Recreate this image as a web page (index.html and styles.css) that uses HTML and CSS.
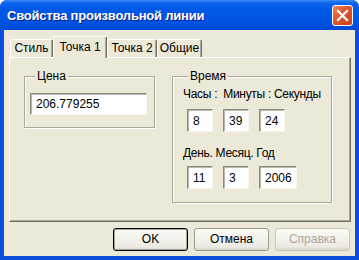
FILE: index.html
```html
<!DOCTYPE html>
<html lang="ru">
<head>
    <meta charset="UTF-8">
    <title>Свойства произвольной линии</title>
    <link rel="stylesheet" href="styles.css">
</head>
<body>
<div class="window">
    <div class="titlebar">
        <span class="title">Свойства произвольной линии</span>
        <span class="close">
            <svg width="13" height="13" viewBox="0 0 13 13">
                <path d="M2 2 L11 11 M11 2 L2 11" stroke="#fff" stroke-width="2.2" stroke-linecap="square"/>
            </svg>
        </span>
    </div>
    <div class="client">
        <div class="tabs">
            <div class="tab t1">Стиль</div>
            <div class="tab t2 active">Точка 1</div>
            <div class="tab t3">Точка 2</div>
            <div class="tab t4">Общие</div>
        </div>
        <div class="pane">
            <fieldset class="group price">
                <legend>Цена</legend>
                <div class="field price-field">206.779255</div>
            </fieldset>
            <fieldset class="group time">
                <legend>Время</legend>
                <div class="label">Часы :&nbsp; Минуты : Секунды</div>
                <div class="row first">
                    <div class="field">8</div>
                    <div class="field">39</div>
                    <div class="field">24</div>
                </div>
                <div class="label second">День. Месяц. Год</div>
                <div class="row">
                    <div class="field">11</div>
                    <div class="field">3</div>
                    <div class="field year">2006</div>
                </div>
            </fieldset>
        </div>
        <div class="buttons">
            <div class="btn default">OK</div>
            <div class="btn">Отмена</div>
            <div class="btn disabled">Справка</div>
        </div>
    </div>
</div>
</body>
</html>
```

FILE: styles.css
```css
* {
    padding: 0;
    margin: 0;
    box-sizing: border-box;
}
body {
    background: #ffffff;
    font-family: "Liberation Sans", Arial, sans-serif;
    font-size: 12px;
    color: #000000;
}
.window {
    width: 359px;
    height: 260px;
    background: #0b4fdb;
    border-radius: 7px 7px 0 0;
    overflow: hidden;
    display: flex;
    flex-direction: column;
}
.titlebar {
    height: 30px;
    flex: none;
    display: flex;
    align-items: center;
    justify-content: space-between;
    padding: 0 6px 0 7px;
    background: linear-gradient(#3b8cf5 0%, #0f63ee 10%, #0058e6 30%, #0054e3 70%, #004ad8 100%);
}
.title {
    color: #ffffff;
    font-weight: bold;
    font-size: 13px;
    letter-spacing: -0.2px;
    text-shadow: 1px 1px 0 #0a1e8a;
    padding-top: 1px;
}
.close {
    width: 21px;
    height: 21px;
    display: flex;
    align-items: center;
    justify-content: center;
    border: 1px solid #ffffff;
    border-radius: 3px;
    background: linear-gradient(135deg, #ee8a6a 0%, #e1592f 40%, #c9401b 100%);
}
.client {
    flex: 1;
    margin: 0 4px 4px;
    background: #ece9d8;
    display: flex;
    flex-direction: column;
}
.tabs {
    display: flex;
    align-items: flex-end;
    height: 27px;
    padding-left: 6px;
    position: relative;
    z-index: 1;
}
.tab {
    height: 18px;
    line-height: 17px;
    text-align: center;
    border-top: 1px solid #ffffff;
    border-left: 1px solid #ffffff;
    border-right: 1px solid #716f64;
    box-shadow: inset -1px 0 0 #aca899;
    border-radius: 2px 2px 0 0;
    background: #ece9d8;
}
.t1 { width: 43px; }
.t2 { width: 54px; }
.t3 { width: 50px; }
.t4 { width: 45px; }
.tab.active {
    height: 22px;
    line-height: 20px;
    margin-bottom: -1px;
}
.pane {
    height: 165px;
    margin: 0 4px 0 5px;
    border-top: 1px solid #ffffff;
    border-left: 1px solid #ffffff;
    border-right: 1px solid #716f64;
    border-bottom: 1px solid #716f64;
    box-shadow: inset -1px -1px 0 #aca899;
    display: flex;
    align-items: flex-start;
    padding: 12px 0 0 14px;
    gap: 17px;
}
.group {
    border: 1px solid #aca899;
    box-shadow: inset 1px 1px 0 #ffffff, 1px 1px 0 #ffffff;
    min-width: 0;
}
.group legend {
    line-height: 13px;
    padding: 0 2px;
    margin-left: 5px;
    background: #ece9d8;
}
.price {
    width: 131px;
    padding: 10px 6px 12px 5px;
}
.time {
    width: 160px;
    padding: 5px 4px 13px 10px;
}
.field {
    width: 26px;
    height: 23px;
    background: #ffffff;
    border: 1px solid;
    border-color: #8d8a7c #f5f4ee #f5f4ee #8d8a7c;
    box-shadow: inset 1px 1px 0 #b9b7ab;
    padding: 4px 0 0 5px;
    line-height: 14px;
}
.price-field {
    width: 117px;
    height: 22px;
    padding-top: 3px;
}
.field.year {
    width: 38px;
}
.label {
    line-height: 13px;
    white-space: nowrap;
    letter-spacing: -0.3px;
}
.label.second {
    margin-top: 15px;
}
.row {
    display: flex;
    gap: 10px;
    margin: 6px 0 0 4px;
}
.row.first {
    margin-top: 8px;
}
.buttons {
    display: flex;
    justify-content: flex-end;
    gap: 6px;
    padding: 6px 5px 0 0;
}
.btn {
    width: 75px;
    height: 23px;
    line-height: 21px;
    text-align: center;
    border: 1px solid #9c998c;
    border-radius: 3px;
    background: linear-gradient(#fbfbf8, #ecebe4 85%, #d8d5c8);
}
.btn.default {
    border-color: #000000;
    box-shadow: inset 0 0 0 1px #aca899;
}
.btn.disabled {
    color: #aca899;
    border-color: #c9c7ba;
}
```
